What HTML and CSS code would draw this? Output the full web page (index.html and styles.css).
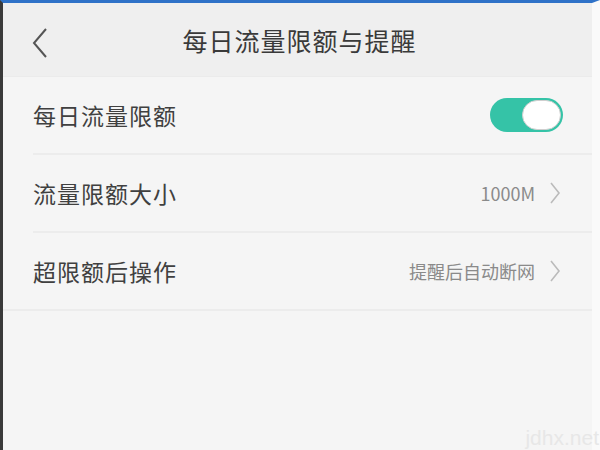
FILE: index.html
```html
<!DOCTYPE html>
<html lang="zh-CN">
<head>
    <meta charset="UTF-8">
    <meta name="viewport" content="width=device-width, initial-scale=1.0">
    <title>每日流量限额与提醒</title>
    <link rel="stylesheet" href="styles.css">
</head>
<body>
    <div class="screen">
        <div class="header">
            <svg class="back" width="20" height="32" viewBox="0 0 20 32">
                <polyline points="16,2 4,16 16,30" fill="none" stroke="#555" stroke-width="2"/>
            </svg>
            <h1>每日流量限额与提醒</h1>
        </div>
        <div class="list">
            <div class="row">
                <span class="label">每日流量限额</span>
                <div class="switch"><div class="knob"></div></div>
            </div>
            <div class="row">
                <span class="label">流量限额大小</span>
                <span class="value">1000M</span>
                <svg class="arrow" width="12" height="24" viewBox="0 0 12 24">
                    <polyline points="2,2 10,12 2,22" fill="none" stroke="#bbb" stroke-width="1.6"/>
                </svg>
            </div>
            <div class="row last">
                <span class="label">超限额后操作</span>
                <span class="value">提醒后自动断网</span>
                <svg class="arrow" width="12" height="24" viewBox="0 0 12 24">
                    <polyline points="2,2 10,12 2,22" fill="none" stroke="#bbb" stroke-width="1.6"/>
                </svg>
            </div>
        </div>
        <div class="mark">jdhx.net</div>
    </div>
</body>
</html>
```

FILE: styles.css
```css
*{
    margin: 0;
    padding: 0;
    box-sizing: border-box;
}
body{
    width: 600px;
    height: 450px;
    overflow: hidden;
    background: #f5f5f5;
    font-family: "Noto Sans CJK SC", "Liberation Sans", sans-serif;
}
.screen{
    position: relative;
    height: 450px;
    border-top: 3px solid #2f72c8;
    border-left: 3px solid #3a3a3a;
    border-right: 8px solid #fafafa;
    background: #f5f5f5;
}
.header{
    display: flex;
    align-items: center;
    justify-content: center;
    position: relative;
    height: 74px;
    background: #efefef;
    border-bottom: 1px solid #ebebeb;
}
.header h1{
    font-size: 25px;
    font-weight: normal;
    color: #3a3a3a;
    letter-spacing: 1px;
    margin-left: 4px;
}
.back{
    position: absolute;
    left: 27px;
    top: 24px;
}
.list{
    padding-left: 30px;
}
.row{
    display: flex;
    align-items: center;
    height: 78px;
    padding-right: 29px;
    border-bottom: 2px solid #ececec;
}
.row.last{
    margin-left: -30px;
    padding-left: 30px;
}
.label{
    flex: 1;
    font-size: 23px;
    color: #404040;
    letter-spacing: 1px;
}
.value{
    font-size: 18px;
    color: #8a8a8a;
    margin-right: 14px;
}
.arrow{
    margin-right: 2px;
}
.switch{
    width: 73px;
    height: 34px;
    border-radius: 17px;
    background: #35c3a7;
    padding: 2px;
    display: flex;
    justify-content: flex-end;
}
.knob{
    width: 39px;
    height: 30px;
    border-radius: 15px;
    background: #fff;
    border: 1px solid #cfcfcf;
}
.mark{
    position: absolute;
    right: -7px;
    bottom: 0;
    font-family: "Liberation Sans", sans-serif;
    font-size: 21px;
    color: #e7e7e7;
}
```
